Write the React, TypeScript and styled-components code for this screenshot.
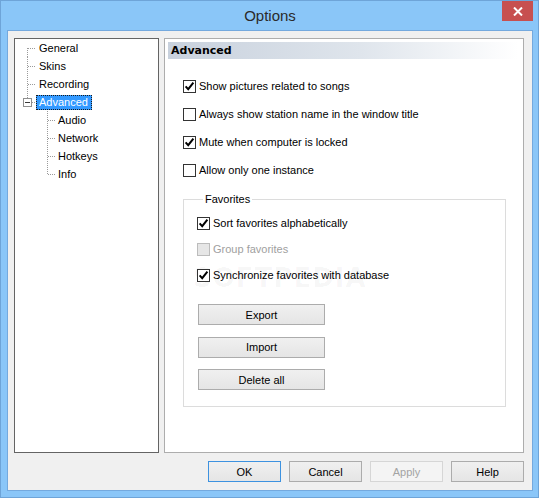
import React from 'react';
import styled, { createGlobalStyle, css } from 'styled-components';

const Global = createGlobalStyle`
  html, body { margin: 0; padding: 0; background: #ffffff; }
  body {
    width: 539px; height: 498px; overflow: hidden;
    font-family: "Liberation Sans", Arial, sans-serif;
    font-size: 11px; color: #000;
  }
  * { box-sizing: border-box; }
`;

const Window = styled.div`
  width: 539px;
  height: 498px;
  background: #8ac6f8;
  border: 1px solid #6ea4d8;
  display: flex;
  flex-direction: column;
  padding: 0 5px 6px 6px;
`;

const TitleBar = styled.div`
  height: 29px;
  display: grid;
  grid-template-columns: 1fr auto 1fr;
  align-items: center;
`;

const Title = styled.div`
  grid-column: 2;
  font-family: "Liberation Sans", Arial, sans-serif;
  font-size: 15px;
  color: #2a2a2a;
  line-height: 20px;
`;

const CloseButton = styled.div`
  grid-column: 3;
  justify-self: end;
  align-self: start;
  width: 31px;
  height: 20px;
  background: #c75050;
  display: flex;
  align-items: center;
  justify-content: center;
`;

const Client = styled.div`
  flex: 1;
  border: 1px solid #74a9de;
  background: #f0f0f0;
  display: flex;
  flex-direction: column;
  padding: 7px 8px 8px 6px;
`;

const Main = styled.div`
  display: flex;
  gap: 5px;
  height: 415px;
`;

const Tree = styled.div`
  width: 145px;
  border: 1px solid #646464;
  background: #fff;
  display: flex;
  flex-direction: column;
`;

const TreeRow = styled.div`
  height: 18px;
  display: flex;
  align-items: center;
`;

const Gutter = styled.svg`
  display: block;
  flex: none;
`;

const TreeLabel = styled.span<{ $selected?: boolean }>`
  height: 15px;
  display: inline-flex;
  align-items: center;
  padding: 0 3px 0 2px;
  border: 1px solid transparent;
  font-size: 11px;
  white-space: nowrap;
  ${(p) =>
    p.$selected &&
    css`
      background: #3399ff;
      color: #fff;
      border: 1px dotted #1a1a1a;
    `}
`;

const Panel = styled.div`
  flex: 1;
  border: 1px solid #adadad;
  background: #fff;
  display: flex;
  flex-direction: column;
  position: relative;
`;

const Header = styled.div`
  margin: 3px 5px 0 3px;
  height: 17px;
  line-height: 17px;
  padding-left: 3px;
  font-family: "DejaVu Sans", Verdana, sans-serif;
  font-weight: bold;
  font-size: 11px;
  background: linear-gradient(to right, #c8d1dd 0%, #dfe5ec 55%, #ffffff 100%);
`;

const OptionList = styled.div`
  margin-top: 13px;
  padding-left: 18px;
  display: flex;
  flex-direction: column;
`;

const CheckRow = styled.label<{ $h: number; $disabled?: boolean }>`
  height: ${(p) => p.$h}px;
  display: flex;
  align-items: center;
  gap: 3px;
  white-space: nowrap;
  position: relative;
  z-index: 1;
  color: ${(p) => (p.$disabled ? '#a0a0a0' : '#000')};
`;

const Box = styled.span<{ $disabled?: boolean }>`
  width: 13px;
  height: 13px;
  flex: none;
  border: 1px solid ${(p) => (p.$disabled ? '#bcbcbc' : '#333333')};
  background: ${(p) => (p.$disabled ? '#e6e6e6' : '#ffffff')};
  display: flex;
  align-items: center;
  justify-content: center;
`;

const Group = styled.fieldset`
  margin: 8px 17px 0 18px;
  padding: 3px 0 16px 13px;
  border: 1px solid #dcdcdc;
  min-width: 0;
  display: flex;
  flex-direction: column;
`;

const Legend = styled.legend`
  margin-left: 6px;
  padding: 0 2px;
  line-height: 15px;
  font-size: 11px;
`;

const ButtonStack = styled.div`
  margin-top: 16px;
  margin-left: 1px;
  display: flex;
  flex-direction: column;
  gap: 11.5px;
`;

const Button = styled.div<{ $w: number; $variant?: 'default' | 'disabled' }>`
  width: ${(p) => p.$w}px;
  height: 21px;
  border: 1px solid #acacac;
  background: linear-gradient(#f0f0f0, #e5e5e5);
  display: flex;
  align-items: center;
  justify-content: center;
  font-size: 11px;
  color: #000;
  ${(p) =>
    p.$variant === 'default' &&
    css`
      border-color: #3d92e0;
    `}
  ${(p) =>
    p.$variant === 'disabled' &&
    css`
      border-color: #d6d6d6;
      background: #f4f4f4;
      color: #a3a3a3;
    `}
`;

const Footer = styled.div`
  margin-top: 8px;
  display: flex;
  justify-content: flex-end;
  gap: 8px;
`;

const Watermark = styled.div`
  position: absolute;
  left: 28px;
  top: 224px;
  font-family: "DejaVu Sans", sans-serif;
  font-weight: bold;
  font-size: 26px;
  letter-spacing: 1px;
  color: rgba(0, 0, 0, 0.035);
  pointer-events: none;
  white-space: nowrap;
`;

type Kind = 'first' | 'mid' | 'child' | 'lastChild';

const DOT = { stroke: '#9a9a9a', strokeWidth: 1, strokeDasharray: '1 1' };

const Connector = ({ kind }: { kind: Kind }) => {
  const child = kind === 'child' || kind === 'lastChild';
  const w = child ? 40 : 21;
  return (
    <Gutter width={w} height={18} viewBox={`0 0 ${w} 18`} shapeRendering="crispEdges">
      {kind === 'first' && (
        <>
          <line x1={12.5} y1={9} x2={12.5} y2={18} {...DOT} />
          <line x1={13} y1={9.5} x2={21} y2={9.5} {...DOT} />
        </>
      )}
      {kind === 'mid' && (
        <>
          <line x1={12.5} y1={0} x2={12.5} y2={18} {...DOT} />
          <line x1={13} y1={9.5} x2={21} y2={9.5} {...DOT} />
        </>
      )}
      {kind === 'child' && (
        <>
          <line x1={32.5} y1={0} x2={32.5} y2={18} {...DOT} />
          <line x1={33} y1={9.5} x2={40} y2={9.5} {...DOT} />
        </>
      )}
      {kind === 'lastChild' && (
        <>
          <line x1={32.5} y1={0} x2={32.5} y2={10} {...DOT} />
          <line x1={33} y1={9.5} x2={40} y2={9.5} {...DOT} />
        </>
      )}
    </Gutter>
  );
};

const OpenConnector = () => (
  <Gutter width={21} height={18} viewBox="0 0 21 18" shapeRendering="crispEdges">
    <line x1={12.5} y1={0} x2={12.5} y2={5} {...DOT} />
    <rect x={8.5} y={5.5} width={8} height={8} fill="#fff" stroke="#8f8f8f" />
    <line x1={10} y1={9.5} x2={15} y2={9.5} stroke="#3a3a3a" />
    <line x1={17} y1={9.5} x2={21} y2={9.5} {...DOT} />
  </Gutter>
);

const treeItems: { label: string; kind: Kind | 'open'; selected?: boolean }[] = [
  { label: 'General', kind: 'first' },
  { label: 'Skins', kind: 'mid' },
  { label: 'Recording', kind: 'mid' },
  { label: 'Advanced', kind: 'open', selected: true },
  { label: 'Audio', kind: 'child' },
  { label: 'Network', kind: 'child' },
  { label: 'Hotkeys', kind: 'child' },
  { label: 'Info', kind: 'lastChild' },
];

const Check = () => (
  <svg width={11} height={11} viewBox="0 0 11 11">
    <path d="M1.6 5.4 L4.2 8.2 L9.4 1.6" fill="none" stroke="#000" strokeWidth={2} strokeLinejoin="miter" />
  </svg>
);

const CheckBox = ({
  label,
  checked,
  disabled,
  h,
}: {
  label: string;
  checked?: boolean;
  disabled?: boolean;
  h: number;
}) => (
  <CheckRow $h={h} $disabled={disabled}>
    <Box $disabled={disabled}>{checked && <Check />}</Box>
    <span>{label}</span>
  </CheckRow>
);

export default function App() {
  return (
    <>
      <Global />
      <Window>
        <TitleBar>
          <Title>Options</Title>
          <CloseButton>
            <svg width={10} height={9} viewBox="0 0 10 9">
              <path d="M1 0.5 L9 8.5 M9 0.5 L1 8.5" stroke="#fff" strokeWidth={2} />
            </svg>
          </CloseButton>
        </TitleBar>
        <Client>
          <Main>
            <Tree>
              {treeItems.map((it) => (
                <TreeRow key={it.label}>
                  {it.kind === 'open' ? <OpenConnector /> : <Connector kind={it.kind} />}
                  <TreeLabel $selected={it.selected}>{it.label}</TreeLabel>
                </TreeRow>
              ))}
            </Tree>
            <Panel>
              <Watermark>SOFTPEDIA</Watermark>
              <Header>Advanced</Header>
              <OptionList>
                <CheckBox h={28} checked label="Show pictures related to songs" />
                <CheckBox h={28} label="Always show station name in the window title" />
                <CheckBox h={28} checked label="Mute when computer is locked" />
                <CheckBox h={28} label="Allow only one instance" />
              </OptionList>
              <Group>
                <Legend>Favorites</Legend>
                <CheckBox h={26} checked label="Sort favorites alphabetically" />
                <CheckBox h={26} disabled label="Group favorites" />
                <CheckBox h={26} checked label="Synchronize favorites with database" />
                <ButtonStack>
                  <Button $w={127}>Export</Button>
                  <Button $w={127}>Import</Button>
                  <Button $w={127}>Delete all</Button>
                </ButtonStack>
              </Group>
            </Panel>
          </Main>
          <Footer>
            <Button $w={73} $variant="default">OK</Button>
            <Button $w={73}>Cancel</Button>
            <Button $w={73} $variant="disabled">Apply</Button>
            <Button $w={73}>Help</Button>
          </Footer>
        </Client>
      </Window>
    </>
  );
}
